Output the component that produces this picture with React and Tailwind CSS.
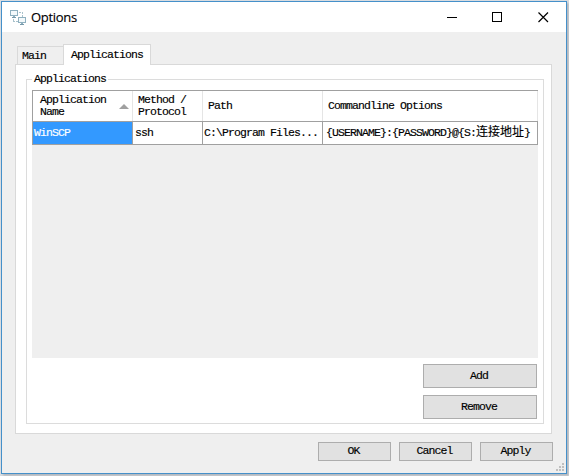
import React from "react";

const mono =
  "font-['Liberation_Mono','Noto_Sans_CJK_SC',monospace] text-[11.5px] tracking-[-0.9px] leading-[12px] text-black whitespace-pre [-webkit-text-stroke:0.15px_currentColor]";

function Button({ children, className }) {
  return (
    <button className={`flex items-center justify-center border border-[#adadad] bg-[#e1e1e1] pr-[2px] tracking-[-0.9px] ${className}`}>
      {children}
    </button>
  );
}

function AppIcon() {
  return (
    <svg width="17" height="16" viewBox="0 0 17 16" fill="none" shapeRendering="crispEdges">
      <path d="M.5 1.500h7v5h-7zM8.500 8.500h7v5h-7z" fill="#f4f9fb" stroke="#8fb0bf" />
      <path d="M3 7h2v1H3zM11 14h2v1h-2z" fill="#8fb0bf" />
      <path d="M2 8.500h4M10 15.500h4" stroke="#7699aa" />
      <path d="M9 3.500h4M12.500 3v5M3.500 10v3M3 12.500h5" stroke="#a9c2cc" strokeDasharray="2 1" />
    </svg>
  );
}

function TitleBar() {
  return (
    <header className="flex h-[30px] shrink-0 items-center bg-white pl-2">
      <AppIcon />
      <h1 className="ml-[4px] grow font-['Open_Sans','Noto_Sans',sans-serif] text-[13px] leading-4 tracking-[-0.3px] text-black">Options</h1>
      <svg className="mr-[16px]" width="103" height="12" viewBox="0 0 103 12" fill="none" stroke="black">
        <path d="M0 6.500h10M45.500 1.500h9v9h-9z" shapeRendering="crispEdges" />
        <path d="M91.500 1.500l9.500 9.500M101 1.500L91.500 11" strokeWidth="1.200" />
      </svg>
    </header>
  );
}

function Table() {
  return (
    <div className="h-[268px] w-[506px] bg-[#efefef]">
      <div className="grid h-[32px] grid-cols-[100px_70px_120px_215px] border-y border-l border-y-[#a0a0a0] border-l-[#a0a0a0] bg-white">
        <div className="flex items-center justify-between border-r border-[#e5e5e5] pl-[7px] pr-[3px]">
          <span>{"Application\nName"}</span>
          <svg width="10" height="5" viewBox="0 0 10 5">
            <path d="M5 0l5 5H0z" fill="#a0a0a0" />
          </svg>
        </div>
        <div className="flex items-center border-r border-[#e5e5e5] pl-[5px]">{"Method /\nProtocol"}</div>
        <div className="flex items-center border-r border-[#e5e5e5] pl-[5px]">Path</div>
        <div className="flex items-center border-r border-[#e5e5e5] pl-[5px]">Commandline Options</div>
      </div>
      <div className="grid h-[23px] grid-cols-[100px_70px_120px_215px] border-b border-l border-[#a0a0a0] bg-white">
        <div className="flex items-center border-r border-[#a0a0a0] bg-[#3399ff] pl-[1px] text-white">WinSCP</div>
        <div className="flex items-center border-r border-[#a0a0a0] pl-[2px]">ssh</div>
        <div className="flex items-center border-r border-[#a0a0a0] pl-[1px]">C:\Program Files...</div>
        <div className="flex items-center border-r border-[#a0a0a0] pl-[3px]">
          <span>{"{USERNAME}:{PASSWORD}@{S:"}</span>
          <span className="text-[12px] tracking-normal">连接地址</span>
          <span>{"}"}</span>
        </div>
      </div>
    </div>
  );
}

export default function App() {
  return (
    <div className={`h-[476px] w-[569px] overflow-hidden bg-[#d9dce0] pl-px pt-px ${mono}`}>
      <div className="flex h-[473px] w-[566px] flex-col border border-[#4590ca] bg-[#efefef] shadow-[2px_2px_2px_#b4b9bf]">
        <TitleBar />
        <main className="flex grow flex-col pl-[13px] pt-[12px]">
          <div className="z-10 -mb-px flex h-[21px] items-end pl-[2px]">
            <div className="mb-px flex h-[18px] w-[46px] items-center border border-b-0 border-r-0 border-[#d9d9d9] pl-[4px]">Main</div>
            <div className="flex h-[21px] w-[88px] items-center border border-b-0 border-[#d9d9d9] bg-white pl-[7px]">
              Applications
            </div>
          </div>
          <section className="h-[370px] w-[537px] border border-[#d9d9d9] bg-white pl-[10px] pt-[8px]">
            <fieldset className="h-[351px] w-[518px] border border-[#dcdcdc] pl-[5px]">
              <legend className="h-[12px] bg-white px-[2px]">Applications</legend>
              <div className="pt-[5px]">
                <Table />
                <div className="flex w-[505px] flex-col items-end gap-[7px] pt-[6px]">
                  <Button className="h-[24px] w-[114px]">Add</Button>
                  <Button className="h-[24px] w-[114px]">Remove</Button>
                </div>
              </div>
            </fieldset>
          </section>
          <footer className="flex h-[38px] justify-end pt-[8px]">
            <div className="flex gap-[8px]">
              <Button className="h-[19px] w-[73px] pb-px">OK</Button>
              <Button className="h-[19px] w-[73px] pb-px">Cancel</Button>
              <Button className="h-[19px] w-[73px] pb-px">Apply</Button>
            </div>
            <svg className="ml-[3px] mr-[2px] mt-[21px] shrink-0" width="8" height="8" fill="#bfbfbf" shapeRendering="crispEdges">
              <path d="M6 0h2v2H6zM3 3h2v2H3zM6 3h2v2H6zM0 6h2v2H0zM3 6h2v2H3zM6 6h2v2H6z" />
            </svg>
          </footer>
        </main>
      </div>
    </div>
  );
}
